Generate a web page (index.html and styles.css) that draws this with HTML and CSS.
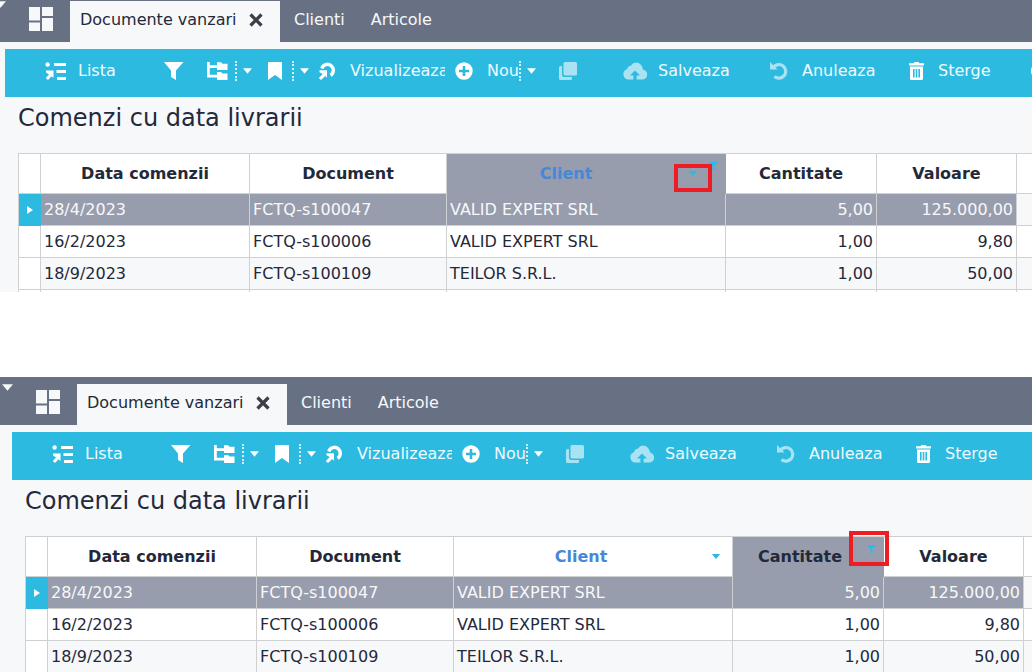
FILE: index.html
```html
<!DOCTYPE html>
<html lang="ro">
<head>
<meta charset="utf-8">
<title>Documente vanzari</title>
<link rel="stylesheet" href="styles.css">
</head>
<body>
<svg class="symbols" aria-hidden="true">
  <symbol id="apps" viewBox="0 0 24 24"><path d="M0 0h11v13.500H0zM13 0h11v9H13zM0 15.500h11V24H0zM13 11h11v13H13z"/></symbol>
  <symbol id="close" viewBox="0 0 14 14"><path d="M1.500 1.500l11 11M12.500 1.500L1.500 12.500" fill="none" stroke="currentColor" stroke-width="3.200"/></symbol>
  <symbol id="down" viewBox="0 0 10 6"><path d="M0 0h10L5 6z"/></symbol>
  <symbol id="list" viewBox="0 0 22 20"><circle cx="2.600" cy="3.500" r="2.200"/><path d="M9 2h12v3H9zM11.500 9h9.500v3h-9.500zM12 16h9v3h-9zM1 9.500h7.500v7.500L6.500 15.200 3 19 .8 17 4 13.500 1 11.500z"/></symbol>
  <symbol id="funnel" viewBox="0 0 20 18"><path d="M0 0h19.500L12 8.500V18l-5-3V8.500z"/></symbol>
  <symbol id="tree" viewBox="0 0 21 18"><path d="M0 0h2.800v3.200H10V.3h4l1.500 1.500H20.500V8H10V6H2.800v6.800H10V10h4l1.500 1.500h5V18H10v-2.500H0z"/></symbol>
  <symbol id="bookmark" viewBox="0 0 14 18"><path d="M.8 0h12.400Q14 0 14 .8V18l-7-5-7 5V.8Q0 0 .8 0z"/></symbol>
  <symbol id="goto" viewBox="0 0 18 18"><path d="M3.800 6.500A5.900 5.900 0 1 1 12.500 13.300" fill="none" stroke="currentColor" stroke-width="3.400"/><path d="M1.500 8.200h7.500v7.500L7.200 14 3 18 .8 16 4.800 12 1.500 10.200z"/></symbol>
  <symbol id="plus" viewBox="0 0 18 18"><path fill-rule="evenodd" d="M9 .3a8.700 8.700 0 1 0 0 17.400A8.700 8.700 0 0 0 9 .3zM7.700 4h2.600v3.700H14v2.600h-3.700V14H7.700v-3.700H4V7.700h3.700z"/></symbol>
  <symbol id="copy" viewBox="0 0 18 18"><path d="M6 0h10.500Q18 0 18 1.500V12q0 1.500-1.500 1.500H6q-1.500 0-1.500-1.500V1.500Q4.500 0 6 0zM1.500 4H3v9q0 2 2 2h8v1.500q0 1.500-1.500 1.500h-10Q0 18 0 16.500v-11Q0 4 1.500 4z"/></symbol>
  <symbol id="cloud" viewBox="0 0 24 18"><path fill-rule="evenodd" d="M5.500 17.500A5.300 5.300 0 0 1 4 7.200 5 5 0 0 1 8 3.500 6.200 6.200 0 0 1 19 4.500a4 4 0 0 1 .8 3 5 5 0 0 1-1.300 10h-4.900V13.500H17l-5-5-5 5h3.400v4z"/></symbol>
  <symbol id="undo" viewBox="0 0 18 18"><path d="M3.500 5.200A6.800 6.800 0 1 1 4.500 14.500" fill="none" stroke="currentColor" stroke-width="3.200"/><path d="M0 0l7.500 7.500H0z"/></symbol>
  <symbol id="trash" viewBox="0 0 15 18"><path d="M0 1.300h4.500L5.500 0h4l1 1.300H15v2.200H0z"/><path fill-rule="evenodd" d="M1 4.500h13v12Q14 18 12.500 18h-10Q1 18 1 16.500zM4 7v8.500h1.600V7zM6.700 7v8.500h1.600V7zM9.400 7v8.500H11V7z"/></symbol>
  <symbol id="more" viewBox="0 0 18 18"><circle cx="9" cy="9" r="7.500" fill="none" stroke="currentColor" stroke-width="3"/></symbol>
  <symbol id="marker" viewBox="0 0 6 8"><path d="M0 0l6 4-6 4z"/></symbol>
  <symbol id="filtered" viewBox="0 0 10 10"><path d="M0 0h10L6 4.200V10L4 8.500V4.200z"/></symbol>
</svg>

<section class="capture">
  <div class="panel panel--shifted">
    <nav class="tabs">
      <button class="menu-toggle" aria-label="Meniu"><svg class="icon"><use href="#down"/></svg></button>
      <button class="apps" aria-label="Aplicatii"><svg class="icon"><use href="#apps"/></svg></button>
      <div class="tab tab--active"><button class="tab-label">Documente vanzari</button><button class="tab-close" aria-label="Inchide"><svg class="icon"><use href="#close"/></svg></button></div>
      <button class="tab">Clienti</button>
      <button class="tab">Articole</button>
    </nav>
    <div class="toolbar">
      <button class="tool tool--near"><svg class="icon icon--list"><use href="#list"/></svg>Lista</button>
      <button class="tool" aria-label="Filtru"><svg class="icon icon--funnel"><use href="#funnel"/></svg></button>
      <div class="split"><button class="tool" aria-label="Grupare"><svg class="icon icon--tree"><use href="#tree"/></svg></button><button class="drop" aria-label="Optiuni grupare"><svg class="icon"><use href="#down"/></svg></button></div>
      <div class="split split--wide"><button class="tool" aria-label="Semn de carte"><svg class="icon icon--bookmark"><use href="#bookmark"/></svg></button><button class="drop" aria-label="Semne de carte"><svg class="icon"><use href="#down"/></svg></button></div>
      <button class="tool"><svg class="icon"><use href="#goto"/></svg><span class="clip">Vizualizeaza</span></button>
      <div class="split split--tight"><button class="tool"><svg class="icon"><use href="#plus"/></svg>Nou</button><button class="drop" aria-label="Optiuni nou"><svg class="icon"><use href="#down"/></svg></button></div>
      <button class="tool tool--off" aria-label="Copiere"><svg class="icon"><use href="#copy"/></svg></button>
      <button class="tool tool--off tool--near"><svg class="icon icon--cloud"><use href="#cloud"/></svg>Salveaza</button>
      <button class="tool tool--off"><svg class="icon"><use href="#undo"/></svg>Anuleaza</button>
      <button class="tool"><svg class="icon icon--trash"><use href="#trash"/></svg>Sterge</button>
      <button class="tool" aria-label="Mai multe"><svg class="icon"><use href="#more"/></svg></button>
    </div>
    <h1 class="title">Comenzi cu data livrarii</h1>
    <table class="grid">
      <colgroup><col class="c-mark"><col class="c-date"><col class="c-doc"><col class="c-client"><col class="c-qty"><col class="c-value"><col></colgroup>
      <thead>
        <tr><th></th><th>Data comenzii</th><th>Document</th>
          <th class="active"><div class="head"><span class="head-label sorted">Client</span><button class="sort" aria-label="Sortare"><svg class="icon"><use href="#down"/></svg></button><svg class="filter"><use href="#filtered"/></svg></div><span class="callout callout--sort"></span></th>
          <th>Cantitate</th><th>Valoare</th><th></th></tr>
      </thead>
      <tbody>
        <tr class="selected"><td class="mark"><svg class="marker"><use href="#marker"/></svg></td><td>28/4/2023</td><td>FCTQ-s100047</td><td>VALID EXPERT SRL</td><td class="num">5,00</td><td class="num">125.000,00</td><td></td></tr>
        <tr><td></td><td>16/2/2023</td><td>FCTQ-s100006</td><td>VALID EXPERT SRL</td><td class="num">1,00</td><td class="num">9,80</td><td></td></tr>
        <tr><td></td><td>18/9/2023</td><td>FCTQ-s100109</td><td>TEILOR S.R.L.</td><td class="num">1,00</td><td class="num">50,00</td><td></td></tr>
        <tr class="stub"><td></td><td></td><td></td><td></td><td></td><td></td><td></td></tr>
      </tbody>
    </table>
  </div>
</section>

<section class="capture">
  <div class="panel">
    <nav class="tabs">
      <button class="menu-toggle" aria-label="Meniu"><svg class="icon"><use href="#down"/></svg></button>
      <button class="apps" aria-label="Aplicatii"><svg class="icon"><use href="#apps"/></svg></button>
      <div class="tab tab--active"><button class="tab-label">Documente vanzari</button><button class="tab-close" aria-label="Inchide"><svg class="icon"><use href="#close"/></svg></button></div>
      <button class="tab">Clienti</button>
      <button class="tab">Articole</button>
    </nav>
    <div class="toolbar">
      <button class="tool tool--near"><svg class="icon icon--list"><use href="#list"/></svg>Lista</button>
      <button class="tool" aria-label="Filtru"><svg class="icon icon--funnel"><use href="#funnel"/></svg></button>
      <div class="split"><button class="tool" aria-label="Grupare"><svg class="icon icon--tree"><use href="#tree"/></svg></button><button class="drop" aria-label="Optiuni grupare"><svg class="icon"><use href="#down"/></svg></button></div>
      <div class="split split--wide"><button class="tool" aria-label="Semn de carte"><svg class="icon icon--bookmark"><use href="#bookmark"/></svg></button><button class="drop" aria-label="Semne de carte"><svg class="icon"><use href="#down"/></svg></button></div>
      <button class="tool"><svg class="icon"><use href="#goto"/></svg><span class="clip">Vizualizeaza</span></button>
      <div class="split split--tight"><button class="tool"><svg class="icon"><use href="#plus"/></svg>Nou</button><button class="drop" aria-label="Optiuni nou"><svg class="icon"><use href="#down"/></svg></button></div>
      <button class="tool tool--off" aria-label="Copiere"><svg class="icon"><use href="#copy"/></svg></button>
      <button class="tool tool--off tool--near"><svg class="icon icon--cloud"><use href="#cloud"/></svg>Salveaza</button>
      <button class="tool tool--off"><svg class="icon"><use href="#undo"/></svg>Anuleaza</button>
      <button class="tool"><svg class="icon icon--trash"><use href="#trash"/></svg>Sterge</button>
    </div>
    <h1 class="title">Comenzi cu data livrarii</h1>
    <table class="grid">
      <colgroup><col class="c-mark"><col class="c-date"><col class="c-doc"><col class="c-client"><col class="c-qty"><col class="c-value"><col></colgroup>
      <thead>
        <tr><th></th><th>Data comenzii</th><th>Document</th>
          <th><div class="head"><span class="head-label sorted">Client</span><button class="sort" aria-label="Sortare"><svg class="icon"><use href="#down"/></svg></button></div></th>
          <th class="active"><div class="head"><span class="head-label">Cantitate</span><svg class="filter"><use href="#filtered"/></svg></div><span class="callout callout--filter"></span></th>
          <th>Valoare</th><th></th></tr>
      </thead>
      <tbody>
        <tr class="selected"><td class="mark"><svg class="marker"><use href="#marker"/></svg></td><td>28/4/2023</td><td>FCTQ-s100047</td><td>VALID EXPERT SRL</td><td class="num">5,00</td><td class="num">125.000,00</td><td></td></tr>
        <tr><td></td><td>16/2/2023</td><td>FCTQ-s100006</td><td>VALID EXPERT SRL</td><td class="num">1,00</td><td class="num">9,80</td><td></td></tr>
        <tr><td></td><td>18/9/2023</td><td>FCTQ-s100109</td><td>TEILOR S.R.L.</td><td class="num">1,00</td><td class="num">50,00</td><td></td></tr>
      </tbody>
    </table>
  </div>
</section>
</body>
</html>
```
FILE: styles.css
```css
* { box-sizing: border-box; }

body {
  margin: 0;
  display: flex;
  flex-direction: column;
  gap: 85px;
  min-height: 100vh;
  overflow: hidden;
  background: #fff;
  color: #24293a;
  font: 16px/20px Verdana, "DejaVu Sans", sans-serif;
}

button {
  margin: 0;
  padding: 0;
  border: 0;
  background: none;
  color: inherit;
  font: inherit;
  cursor: pointer;
}

svg { display: block; flex: none; fill: currentColor; }
.symbols { position: absolute; width: 0; height: 0; }

.capture { overflow: hidden; }
.panel { background: #f7f8fa; }
/* shows the panel scrolled slightly past its top left corner */
.panel--shifted { margin: -6px 0 0 -7px; }

/* tab strip */
.tabs {
  display: flex;
  align-items: stretch;
  height: 48px;
  padding-top: 7px;
  background: #687184;
  color: #f7f8fa;
}
.menu-toggle { align-self: flex-start; padding-left: 2px; width: 36px; }
.menu-toggle .icon { width: 11px; height: 7px; }
.apps { width: 41px; padding-bottom: 5px; }
.apps .icon { width: 24px; height: 24px; }
.tab { display: flex; align-items: center; padding: 0 0 4px 14px; margin-right: 12px; }
.tab--active {
  gap: 13px;
  width: 210px;
  padding: 0 0 4px 10px;
  margin-right: 0;
  background: #f7f8fa;
  color: #24293a;
}
.tab-label { white-space: nowrap; }
.tab-close { color: #3b3f48; }
.tab-close .icon { width: 14px; height: 14px; }

/* toolbar */
.toolbar {
  display: grid;
  grid-template-columns: 119px 43px 61px 50px 137px 104px 64px 147px 139px 122px auto;
  align-items: center;
  height: 48px;
  margin: 7px 0 0 12px;
  padding: 0 0 5px 40px;
  overflow: hidden;
  background: #2cbae0;
  color: #fff;
}
.tool { display: flex; align-items: center; gap: 14px; color: #eefaff; }
.tool .icon { width: 18px; height: 18px; color: #fff; }
.tool .icon--list { width: 22px; height: 20px; }
.tool .icon--funnel { width: 20px; }
.tool .icon--tree { width: 21px; }
.tool .icon--bookmark { width: 14px; }
.tool .icon--cloud { width: 24px; }
.tool .icon--trash { width: 15px; }
.tool--off .icon { color: #a9e3f3; }
.tool--near { gap: 11px; }
.clip { width: 95px; overflow: hidden; white-space: nowrap; text-align: left; }
.split { display: flex; align-items: center; gap: 7px; }
.split--wide { gap: 10px; }
.split--tight { gap: 0; }
.drop { height: 20px; padding-left: 6px; border-left: 2px dotted #d5f1f9; }
.drop .icon { width: 9px; height: 6px; }

.title {
  margin: 0;
  padding: 7px 25px 21px;
  font-size: 24px;
  line-height: 28px;
  font-weight: normal;
}

/* data grid */
.grid {
  width: calc(100% - 25px);
  margin-left: 25px;
  table-layout: fixed;
  border-collapse: separate;
  border-spacing: 0;
  border-top: 1px solid #cfd0d2;
  border-left: 1px solid #cfd0d2;
}
.c-mark { width: 22px; }
.c-date { width: 209px; }
.c-doc { width: 197px; }
.c-client { width: 279px; }
.c-qty { width: 151px; }
.c-value { width: 140px; }

th, td {
  height: 32px;
  padding: 0 3px;
  overflow: hidden;
  border-right: 1px solid #cfd0d2;
  border-bottom: 1px solid #cfd0d2;
  background: #fff;
  text-align: left;
  white-space: nowrap;
}
th:last-child, td:last-child { border-right: 0; }
th { position: relative; height: 40px; padding: 0; overflow: visible; text-align: center; }
tbody tr:nth-child(odd) td:not(:first-child) { background: #f7f8fa; }
td.num { text-align: right; }
tbody .selected td:not(:first-child):not(:last-child) { background: #979dac; color: #f7f8fa; }
tbody .selected .mark { background: #2cbae0; color: #fff; border-color: #2cbae0; }
.marker { width: 6px; height: 8px; margin-left: 5px; }
.stub td { height: 2px; border-bottom: 0; padding: 0; }
.active { z-index: 1; background: #979dac; border-color: #979dac; }

.head { display: flex; align-items: center; }
.head-label { flex: 1; }
.sorted { color: #4788d6; }
.sort { width: 24px; padding-left: 3px; color: #2cbae0; }
.sort .icon { width: 10px; height: 5px; }
.filter { width: 9px; height: 9px; margin-right: 7px; margin-bottom: 14px; color: #1fbdf0; }

/* red frames that point out a header control */
.callout { position: absolute; border: 4px solid #ee1c24; pointer-events: none; }
.callout--sort { top: 10px; right: 13px; width: 38px; height: 28px; }
.callout--filter { top: -6px; right: -6px; width: 40px; height: 35px; }
```
